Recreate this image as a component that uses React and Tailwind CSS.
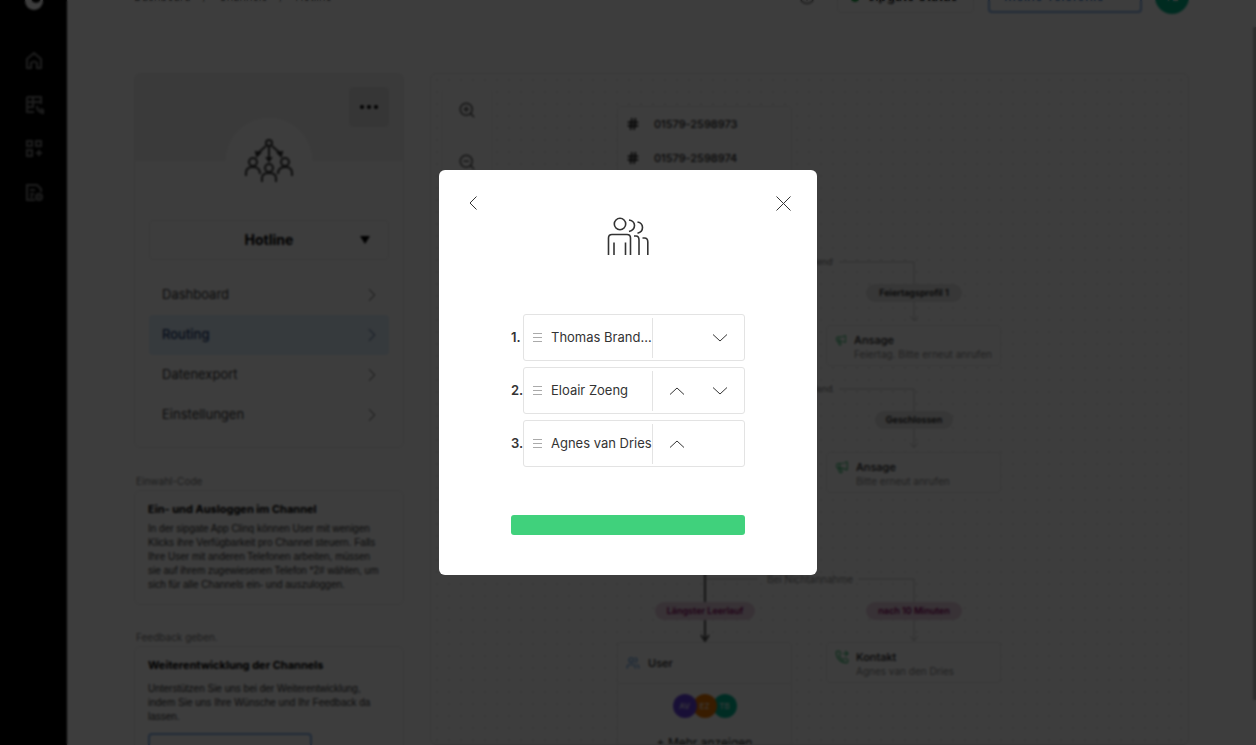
import { useState } from 'react'
import { clsx } from 'clsx'
import {
  ChevronDown,
  ChevronRight,
  CircleHelp,
  Hash,
  Megaphone,
  PhoneForwarded,
  Users,
  ZoomIn,
  ZoomOut,
} from 'lucide-react'

const menuItems = ['Dashboard', 'Routing', 'Datenexport', 'Einstellungen']

const initialUsers = ['Thomas Brandstätter', 'Eloair Zoeng', 'Agnes van Dries']

const sidebarIcons = [
  { label: 'Start', path: 'M2 8 L9 2 L16 8 V17 H12 V12 Q9 9 6 12 V17 H2 Z' },
  { label: 'Anrufe', path: 'M2 2 H16 V9 M2 2 V17 H9 M2 7 H16 M2 12 H9 M8 2 V12 M12 11 Q12 17 18 18 L18 15 L15 14' },
  { label: 'Apps', path: 'M2 2 H7 V7 H2 Z M11 2 H16 V7 H11 Z M2 11 H7 V17 H2 Z M14 11 V17 M11 14 H17' },
  { label: 'Rechnungen', path: 'M10 17 H2 V2 H12 L16 6 V9 M5 7 H10 M5 11 H9 M5 14 H8 M17 14 A3 3 0 1 1 11 14 A3 3 0 1 1 17 14 M13 14 H15' },
]

function Sidebar() {
  return (
    <nav className="flex w-[67px] shrink-0 flex-col items-center bg-black">
      <svg viewBox="0 0 18 18" className="-mt-2 h-[18px] w-[18px] shrink-0" aria-hidden="true">
        <circle cx="9" cy="9" r="9" fill="#fff" />
        <circle cx="11" cy="6" r="5" fill="#000" />
      </svg>
      <div className="mt-[41px] flex flex-col gap-[26px]">
        {sidebarIcons.map((icon) => (
          <a key={icon.label} href="#" aria-label={icon.label}>
            <svg
              viewBox="0 0 18 18"
              className="h-[18px] w-[18px] overflow-visible"
              fill="none"
              stroke="#808080"
              strokeWidth="2"
            >
              <path d={icon.path} />
            </svg>
          </a>
        ))}
      </div>
    </nav>
  )
}

function Header() {
  return (
    <header className="-mt-[19px] flex h-8 items-center justify-between">
      <p className="flex gap-3 text-[11px] text-[#777]">
        <span>Dashboard</span>
        <span>/</span>
        <span>Channels</span>
        <span>/</span>
        <span>Hotline</span>
      </p>
      <div className="flex items-center">
        <CircleHelp size={16} className="mr-[22px] text-[#666]" />
        <button className="mr-[14px] flex h-8 w-[137px] items-center gap-2 rounded border border-[#e8e8e8] px-3 text-[13px] font-semibold whitespace-nowrap text-[#222]">
          <span className="h-2.5 w-2.5 rounded-full bg-[#129b3c]" />
          sipgate Status
        </button>
        <button className="mr-[13px] flex h-8 w-[154px] items-center justify-between rounded border-2 border-[#84b0e8] px-3.5 text-[13px] font-semibold whitespace-nowrap text-[#5f92d2]">
          Meine Telefonie
          <ChevronDown size={12} />
        </button>
        <span className="grid h-[34px] w-[34px] place-items-center rounded-full bg-[#00b288] text-[11px] text-white">
          TB
        </span>
      </div>
    </header>
  )
}

function ChannelLogo() {
  return (
    <svg viewBox="0 0 48 44" className="h-11 w-12" fill="none" stroke="#333" strokeWidth="2">
      <circle cx="24" cy="4" r="3" />
      <path d="M21 7 L12 15 M24 8 V19 M27 7 L36 15" />
      <path d="M11 13 L15 14 L12 17 Z M37 13 L33 14 L36 17 Z M22 19 H26 L24 22 Z" fill="#222" />
      <circle cx="8" cy="23" r="4" />
      <circle cx="24" cy="29" r="4" />
      <circle cx="40" cy="23" r="4" />
      <path d="M1 37 V34 Q1 28 8 28 Q15 28 15 35 M33 35 Q33 28 40 28 Q47 28 47 34 V37 M17 43 V39 Q17 34 24 34 Q31 34 31 39 V43" />
    </svg>
  )
}

function ChannelCard() {
  return (
    <section className="rounded-md border border-[#e8e8e8] bg-white pb-3">
      <div className="flex h-[87px] justify-end rounded-t-md bg-[#f2f2f2] px-[14px] pt-[13px]">
        <button
          aria-label="Mehr Optionen"
          className="flex h-10 w-10 items-center justify-center gap-[3px] rounded bg-[#e2e2e2]"
        >
          <span className="h-1 w-1 rounded-full bg-black" />
          <span className="h-1 w-1 rounded-full bg-black" />
          <span className="h-1 w-1 rounded-full bg-black" />
        </button>
      </div>
      <div className="mx-auto -mt-[43px] grid h-[86px] w-[86px] place-items-center rounded-full bg-white">
        <ChannelLogo />
      </div>
      <div className="px-[14px]">
        <button className="relative mt-4 flex h-10 w-full items-center justify-center rounded border border-[#e8e8e8] text-sm font-bold text-black">
          Hotline
          <svg viewBox="0 0 10 8" className="absolute right-[18px] h-2 w-2.5" aria-hidden="true">
            <path d="M0 0 H10 L5 8 Z" fill="#000" />
          </svg>
        </button>
        <ul className="mt-[15px]">
          {menuItems.map((item) => (
            <li key={item}>
              <a
                href="#"
                className={clsx(
                  'flex h-10 items-center justify-between rounded-sm pr-1.5 pl-[13px] text-[13px]',
                  item === 'Routing'
                    ? 'bg-[#e0f0fc] font-medium text-[#1b3a70]'
                    : 'text-[#333]',
                )}
              >
                {item}
                <ChevronRight size={22} strokeWidth={1} />
              </a>
            </li>
          ))}
        </ul>
      </div>
    </section>
  )
}

function InfoCards() {
  return (
    <>
      <p className="mt-[26px] pl-0.5 text-[10px] leading-[14px] text-[#777]">Einwahl-Code</p>
      <section className="mt-0.5 rounded-md border border-[#e8e8e8] px-[13px] pt-2.5 pb-3">
        <h2 className="text-[11px] leading-4 font-bold text-black">Ein- und Ausloggen im Channel</h2>
        <p className="mt-[5px] font-['Liberation_Sans',sans-serif] text-[10px] leading-[14px] whitespace-nowrap text-[#333]">
          In der sipgate App Clinq können User mit wenigen
          <br />
          Klicks ihre Verfügbarkeit pro Channel steuern. Falls
          <br />
          Ihre User mit anderen Telefonen arbeiten, müssen
          <br />
          sie auf ihrem zugewiesenen Telefon *2# wählen, um
          <br />
          sich für alle Channels ein- und auszuloggen.
        </p>
      </section>
      <p className="mt-[25px] pl-0.5 text-[10px] leading-[14px] text-[#777]">Feedback geben.</p>
      <section className="mt-0.5 rounded-md border border-[#e8e8e8] px-[13px] pt-2.5 pb-3">
        <h2 className="text-[11px] leading-4 font-bold text-black">
          Weiterentwicklung der Channels
        </h2>
        <p className="mt-[9px] font-['Liberation_Sans',sans-serif] text-[10px] leading-[14px] whitespace-nowrap text-[#333]">
          Unterstützen Sie uns bei der Weiterentwicklung,
          <br />
          indem Sie uns Ihre Wünsche und Ihr Feedback da
          <br />
          lassen.
        </p>
        <button className="mt-[9px] h-10 w-[164px] rounded border-2 border-[#84b0e8] text-[11px] font-semibold text-[#5f92d2]">
          Feedback geben
        </button>
      </section>
    </>
  )
}

function Pill({ className, children }) {
  return (
    <span
      className={clsx(
        'absolute flex h-[18px] items-center justify-center rounded-full text-[9px] font-semibold',
        className,
      )}
    >
      {children}
    </span>
  )
}

function ActionNode({ className, icon: Icon, title, subtitle }) {
  return (
    <div
      className={clsx(
        'absolute flex h-[41px] w-[175px] gap-[7px] rounded border border-[#e8e8e8] bg-white px-2 pt-[7px]',
        className,
      )}
    >
      <Icon size={14} className="text-[#3cb872]" />
      <div className="whitespace-nowrap">
        <p className="text-[11px] leading-[14px] font-medium text-[#222]">{title}</p>
        <p className="text-[10px] leading-[14px] text-[#888]">{subtitle}</p>
      </div>
    </div>
  )
}

function Edges() {
  return (
    <svg className="absolute inset-0 h-full w-full" fill="none" stroke="#c4c4c4" strokeWidth="1">
      <path d="M408 188 H483 V246 M479 242 L483 247 L487 242" />
      <path d="M408 315 H483 V373 M479 369 L483 374 L487 369" />
      <path d="M274 505 H327 M427 505 H483 V566 M479 562 L483 567 L487 562" />
      <path d="M274 490 V566 M270 561 L274 567 L278 561" stroke="#555" strokeWidth="2" />
    </svg>
  )
}

function RoutingCanvas() {
  return (
    <section className="relative min-w-0 flex-1 overflow-hidden rounded-md border border-[#e4e4e4] bg-[radial-gradient(#e2e2e2_1px,transparent_1px)] bg-size-[12px_12px]">
      <Edges />
      <div className="absolute top-3 left-3 flex h-32 w-12 flex-col items-center gap-[34px] rounded bg-white pt-[15px] text-[#555] shadow">
        <button aria-label="Vergrößern">
          <ZoomIn size={18} />
        </button>
        <button aria-label="Verkleinern">
          <ZoomOut size={18} />
        </button>
      </div>

      <ul className="absolute top-8 left-[186px] w-[175px] rounded border border-[#e8e8e8] bg-white text-[11px] font-medium text-[#222]">
        {['01579-2598973', '01579-2598974'].map((number) => (
          <li key={number} className="flex h-[34px] items-center gap-3.5 px-2">
            <Hash size={14} strokeWidth={3} />
            {number}
          </li>
        ))}
      </ul>

      <span className="absolute top-[181px] left-[357px] text-[9px] leading-[14px] text-[#777]">
        Zutreffend
      </span>
      <Pill className="top-[210px] left-[435px] w-24 bg-[#e4e4e4] text-[#222]">Feiertagsprofil 1</Pill>
      <ActionNode
        className="top-[251px] left-[395px]"
        icon={Megaphone}
        title="Ansage"
        subtitle="Feiertag. Bitte erneut anrufen"
      />
      <span className="absolute top-[308px] left-[357px] text-[9px] leading-[14px] text-[#777]">
        Zutreffend
      </span>
      <Pill className="top-[337px] left-[444px] w-[78px] bg-[#e4e4e4] text-[#222]">Geschlossen</Pill>
      <ActionNode
        className="top-[378px] left-[395px]"
        icon={Megaphone}
        title="Ansage"
        subtitle="Bitte erneut anrufen"
      />

      <span className="absolute top-[498px] left-[336px] text-[10px] leading-[14px] whitespace-nowrap text-[#888]">
        Bei Nichtannahme
      </span>
      <Pill className="top-[528px] left-[224px] w-[100px] bg-[#e8d0e0] text-[#85005c]">
        Längster Leerlauf
      </Pill>
      <Pill className="top-[528px] left-[435px] w-24 bg-[#e8d0e0] text-[#85005c]">
        nach 10 Minuten
      </Pill>
      <ActionNode
        className="top-[568px] left-[395px]"
        icon={PhoneForwarded}
        title="Kontakt"
        subtitle="Agnes van den Dries"
      />
      <div className="absolute top-[568px] left-[186px] w-[175px] rounded border border-[#e8e8e8] bg-white pb-4 text-[#222]">
        <div className="flex h-[41px] items-center gap-2 border-b border-[#e8e8e8] px-2 text-[11px] font-medium">
          <Users size={14} className="text-[#5b9be0]" />
          User
        </div>
        <div className="mt-2.5 flex justify-center -space-x-1 text-[8px] text-white">
          <span className="z-30 grid h-6 w-6 place-items-center rounded-full bg-[#6742e0]">AV</span>
          <span className="z-20 grid h-6 w-6 place-items-center rounded-full bg-[#e87400]">EZ</span>
          <span className="z-10 grid h-6 w-6 place-items-center rounded-full bg-[#00b894]">TB</span>
        </div>
        <button className="mt-4 w-full text-[12px]">+ Mehr anzeigen</button>
      </div>
    </section>
  )
}

function PeopleIcon() {
  return (
    <svg
      viewBox="0 0 42 38"
      className="h-[38px] w-[42px]"
      fill="none"
      stroke="#333"
      strokeWidth="1.6"
      aria-hidden="true"
    >
      <circle cx="13" cy="7" r="5.7" />
      <path d="M1.5 38 V21 Q1.5 17.5 5 17.5 H20 Q23.5 17.5 23.5 21 V38" />
      <path d="M7 25.5 V38 M18.5 25.5 V38" />
      <path d="M22 3 Q27.5 4 27.5 8.5 Q27.5 13 22 14.5" />
      <path d="M30.5 5 Q35.5 6 35.5 10.5 Q35.5 15 30.5 16.3" />
      <path d="M27 19 H29 Q32 19 32 23 V38" />
      <path d="M35.5 21 H37.5 Q40.8 21 40.8 25 V38" />
    </svg>
  )
}

function Arrow({ up }) {
  return (
    <svg viewBox="0 0 14 8" className="h-2 w-3.5" fill="none" stroke="#333" strokeWidth="1">
      <path d={up ? 'M0 7.5 L7 1 L14 7.5' : 'M0 0.5 L7 7 L14 0.5'} />
    </svg>
  )
}

function OrderRow({ index, name, last, onMove }) {
  return (
    <li className="flex items-center text-[13px] text-[#333]">
      <span className="w-3 shrink-0 font-semibold">{index + 1}.</span>
      <div className="flex h-[47px] min-w-0 flex-1 items-center rounded-[3px] border border-[#e3e3e3] pr-0.5">
        <svg viewBox="0 0 9 9" className="mr-[9px] ml-[9px] h-[9px] w-[9px] shrink-0" stroke="#aaa">
          <path d="M0 0.5 H9 M0 4.5 H9 M0 8.5 H9" />
        </svg>
        <span className="min-w-0 flex-1 truncate">{name}</span>
        <div className="flex h-10 w-[90px] shrink-0 border-l border-[#e3e3e3] pl-0.5">
          <div className="grid w-11 place-items-center">
            {index > 0 && (
              <button aria-label={`${name} nach oben`} className="p-2" onClick={() => onMove(index, -1)}>
                <Arrow up />
              </button>
            )}
          </div>
          <div className="grid w-11 place-items-center">
            {!last && (
              <button aria-label={`${name} nach unten`} className="p-2" onClick={() => onMove(index, 1)}>
                <Arrow />
              </button>
            )}
          </div>
        </div>
      </div>
    </li>
  )
}

function OrderDialog() {
  const [users, setUsers] = useState(initialUsers)

  function moveUser(index, step) {
    const next = [...users]
    const [user] = next.splice(index, 1)
    next.splice(index + step, 0, user)
    setUsers(next)
  }

  return (
    <div
      role="dialog"
      aria-modal="true"
      aria-label="Reihenfolge der User"
      className="w-[378px] rounded-md bg-white pt-[26px] pb-10"
    >
      <div className="flex h-[14px] items-center justify-between pr-[26px] pl-[30px]">
        <button aria-label="Zurück">
          <svg viewBox="0 0 8 14" className="h-3.5 w-2" fill="none" stroke="#333">
            <path d="M7.5 0.5 L1 7 L7.5 13.5" />
          </svg>
        </button>
        <button aria-label="Schließen">
          <svg viewBox="0 0 15 15" className="h-[15px] w-[15px]" fill="none" stroke="#333">
            <path d="M0.5 0.5 L14.5 14.5 M14.5 0.5 L0.5 14.5" />
          </svg>
        </button>
      </div>
      <div className="mt-[7px] flex justify-center">
        <PeopleIcon />
      </div>
      <div className="mx-auto mt-[59px] w-[234px]">
        <ol className="flex flex-col gap-1.5">
          {users.map((name, index) => (
            <OrderRow
              key={name}
              index={index}
              name={name}
              last={index === users.length - 1}
              onMove={moveUser}
            />
          ))}
        </ol>
        <button aria-label="Speichern" className="mt-12 block h-5 w-full rounded-[3px] bg-[#40d17c]" />
      </div>
    </div>
  )
}

export default function App() {
  return (
    <div className="relative h-screen overflow-hidden bg-white font-['Inter',sans-serif]">
      <div className="flex h-full" inert>
        <Sidebar />
        <main className="flex min-w-0 flex-1 flex-col px-[67px]">
          <Header />
          <div className="mt-[60px] flex min-h-0 flex-1 gap-[26px]">
            <div className="w-[270px] shrink-0">
              <ChannelCard />
              <InfoCards />
            </div>
            <RoutingCanvas />
          </div>
        </main>
        <div className="absolute top-[27px] right-0 h-[673px] w-[3px] bg-[#bbb]" />
      </div>
      <div className="fixed inset-0 z-50 grid place-items-center bg-black/76 backdrop-blur-[1px]">
        <OrderDialog />
      </div>
    </div>
  )
}
